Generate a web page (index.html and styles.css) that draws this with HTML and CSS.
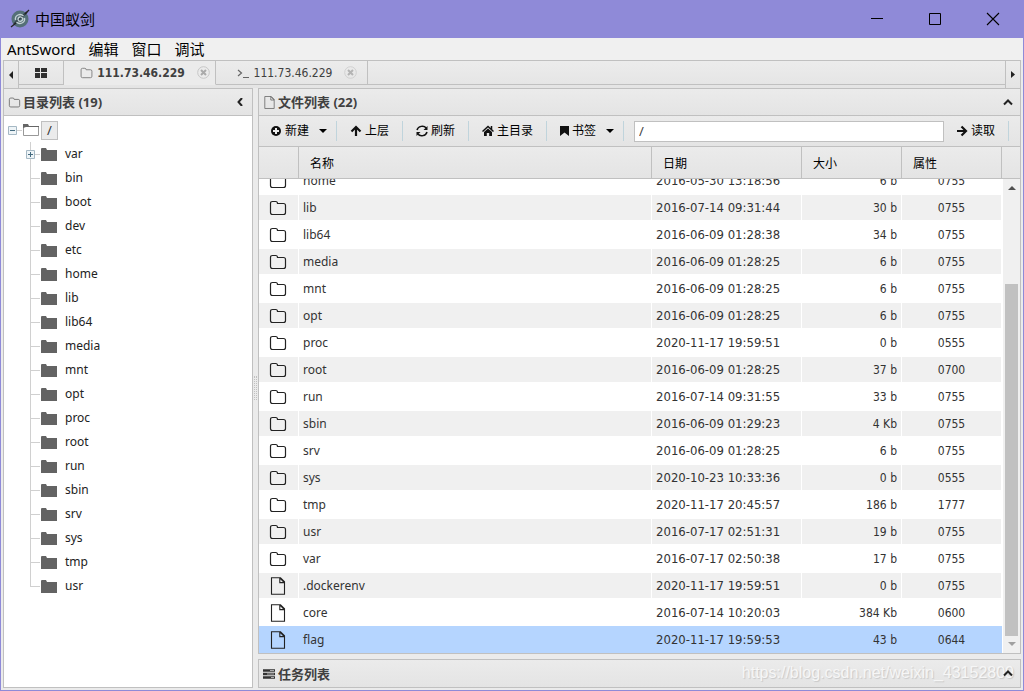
FILE: index.html
```html
<!DOCTYPE html>
<html lang="zh-CN">
<head>
<meta charset="utf-8">
<title>中国蚁剑</title>
<link rel="stylesheet" href="styles.css">
</head>
<body>
<svg class="sprite" width="0" height="0" aria-hidden="true">
  <symbol id="folder" viewBox="0 0 18 16"><path d="M1.500 12.500v-9q0-2 2-2h3.200q1.800 0 1.800 2h6q2 0 2 2v7q0 2-2 2h-11q-2 0-2-2z" fill="none" stroke="currentColor" stroke-width="1.200"/></symbol>
  <symbol id="file" viewBox="0 0 18 18"><path d="M2.500.7h9l4 4v12.600h-13zM10.800 1v4.600h4.500M11 1l4.300 4.500" fill="none" stroke="currentColor" stroke-width="1.100"/></symbol>
  <symbol id="solid" viewBox="0 0 16 13"><path d="M0 1q0-1 1-1h4l1 2h10v11H0z" fill="#636363"/></symbol>
  <symbol id="down" viewBox="0 0 8 4"><path d="M0 0h8L4 4z" fill="currentColor"/></symbol>
</svg>
<div class="window">
  <header class="titlebar">
    <svg class="logo" width="20" height="20" viewBox="0 0 20 20"><circle cx="10" cy="10" r="8.500" fill="#557078"/><path d="M4 15L17 3" stroke="#34434a" stroke-width="2"/><path d="M5.500 11c-1-5 5-7 8-4M14.500 9c1 5-5 7-8 4M8 11c0-4 4-4 5-1-1 3-4 3-5 1" fill="none" stroke="#c5d2d6" stroke-width="1.300"/><path d="M1 18l5-4M15 5l4-4" stroke="#222" stroke-width="1.300"/></svg>
    <h1 class="title">中国蚁剑</h1>
    <div class="controls">
      <button class="ctl" aria-label="最小化"><svg width="14" height="14" viewBox="0 0 14 14"><path d="M1 6.500h12" stroke="#000"/></svg></button>
      <button class="ctl" aria-label="最大化"><svg width="14" height="14" viewBox="0 0 14 14"><path d="M1.500 1.500h11v11h-11z" fill="none" stroke="#000"/></svg></button>
      <button class="ctl" aria-label="关闭"><svg width="14" height="14" viewBox="0 0 14 14"><path d="M1 1l12 12M13 1L1 13" stroke="#000" stroke-width="1.100"/></svg></button>
    </div>
  </header>
  <nav class="menu"><button>AntSword</button><button>编辑</button><button>窗口</button><button>调试</button></nav>
  <main class="app">
    <div class="tabs">
      <button class="arrow" aria-label="向左"><svg width="4" height="8" viewBox="0 0 4 8"><path d="M4 0v8L0 4z" fill="#222"/></svg></button>
      <div class="tablist">
        <button class="tab home" aria-label="主页"><svg width="12" height="10" viewBox="0 0 12 10"><path d="M0 0h5v4H0zM6 0h6v4H6zM0 5h5v5H0zM6 5h6v5H6z" fill="#303030"/></svg></button>
        <div class="tab active"><svg class="tabicon" width="13" height="12"><use href="#folder"/></svg><button class="tabname">111.73.46.229</button><button class="close" aria-label="关闭标签"><svg width="13" height="13" viewBox="0 0 13 13"><circle cx="6.500" cy="6.500" r="5.800" fill="none" stroke="#c6c6c6"/><path d="M4 4l5 5M9 4L4 9" stroke="#aaa" stroke-width="2"/></svg></button></div>
        <div class="tab"><svg class="tabicon" width="13" height="12" viewBox="0 0 13 12"><path d="M1 3l3.500 3L1 9M6 10.500h6" fill="none" stroke="#666" stroke-width="1.200"/></svg><button class="tabname">111.73.46.229</button><button class="close" aria-label="关闭标签"><svg width="13" height="13" viewBox="0 0 13 13"><circle cx="6.500" cy="6.500" r="5.800" fill="none" stroke="#d0d0d0"/><path d="M4 4l5 5M9 4L4 9" stroke="#b4b4b4" stroke-width="2"/></svg></button></div>
      </div>
      <button class="arrow right" aria-label="向右"><svg width="4" height="7" viewBox="0 0 4 7"><path d="M0 0v7l4-3.500z" fill="#222"/></svg></button>
    </div>
    <div class="split">
      <section class="panel side">
        <div class="phead"><svg class="pico" width="13" height="11"><use href="#folder"/></svg><h2>目录列表 (19)</h2><button class="fold" aria-label="折叠"><svg width="6" height="8" viewBox="0 0 6 8"><path d="M5 0L1.500 4 5 8" fill="none" stroke="#222" stroke-width="2"/></svg></button></div>
        <div class="tree">
          <div class="root"><button class="box" aria-label="收起"><svg width="9" height="9" viewBox="0 0 9 9"><path d="M.5.5h8v8h-8z" fill="#eef4f7" stroke="#a5b8c4"/><path d="M2 4.500h5" stroke="#456b80"/></svg></button><i class="link"></i><svg class="open" width="16" height="12" viewBox="0 0 16 12"><path d="M.5 2.500h15v9H.5z" fill="#fff" stroke="#999"/><path d="M0 4V0h5l1 2h10v1H3z" fill="#666"/></svg><span class="slash">/</span></div>
          <ul class="nodes">
            <li class="first"><button class="box" aria-label="展开"><svg width="9" height="9" viewBox="0 0 9 9"><path d="M.5.5h8v8h-8z" fill="#eef4f7" stroke="#a5b8c4"/><path d="M2 4.500h5M4.500 2v5" stroke="#456b80"/></svg></button><svg width="16" height="13"><use href="#solid"/></svg>var</li>
            <li><svg width="16" height="13"><use href="#solid"/></svg>bin</li>
            <li><svg width="16" height="13"><use href="#solid"/></svg>boot</li>
            <li><svg width="16" height="13"><use href="#solid"/></svg>dev</li>
            <li><svg width="16" height="13"><use href="#solid"/></svg>etc</li>
            <li><svg width="16" height="13"><use href="#solid"/></svg>home</li>
            <li><svg width="16" height="13"><use href="#solid"/></svg>lib</li>
            <li><svg width="16" height="13"><use href="#solid"/></svg>lib64</li>
            <li><svg width="16" height="13"><use href="#solid"/></svg>media</li>
            <li><svg width="16" height="13"><use href="#solid"/></svg>mnt</li>
            <li><svg width="16" height="13"><use href="#solid"/></svg>opt</li>
            <li><svg width="16" height="13"><use href="#solid"/></svg>proc</li>
            <li><svg width="16" height="13"><use href="#solid"/></svg>root</li>
            <li><svg width="16" height="13"><use href="#solid"/></svg>run</li>
            <li><svg width="16" height="13"><use href="#solid"/></svg>sbin</li>
            <li><svg width="16" height="13"><use href="#solid"/></svg>srv</li>
            <li><svg width="16" height="13"><use href="#solid"/></svg>sys</li>
            <li><svg width="16" height="13"><use href="#solid"/></svg>tmp</li>
            <li><svg width="16" height="13"><use href="#solid"/></svg>usr</li>
          </ul>
        </div>
      </section>
      <div class="grip"><i></i></div>
      <div class="content">
        <section class="panel files">
          <div class="phead"><svg class="pico" width="13" height="13"><use href="#file"/></svg><h2>文件列表 (22)</h2><button class="fold" aria-label="折叠"><svg width="10" height="7" viewBox="0 0 10 7"><path d="M1 5.500L5 1.500l4 4" fill="none" stroke="#222" stroke-width="2"/></svg></button></div>
          <div class="toolbar">
            <button class="tool"><svg width="12" height="12" viewBox="0 0 12 12"><circle cx="6" cy="6" r="5" fill="#111"/><path d="M6 3v6M3 6h6" stroke="#eee" stroke-width="2"/></svg>新建<svg class="caret" width="8" height="4"><use href="#down"/></svg></button>
            <button class="tool"><svg width="12" height="12" viewBox="0 0 12 12"><path d="M6 11V2M1.500 6.500L6 2l4.500 4.500" fill="none" stroke="#111" stroke-width="2.200"/></svg>上层</button>
            <button class="tool"><svg width="12" height="12" viewBox="0 0 12 12"><path d="M1 5c1-4 7-5 9-2M11 7c-1 4-7 5-9 2" fill="none" stroke="#111" stroke-width="1.500"/><path d="M11.500 1V5H7.500zM.5 11V7H4.500z" fill="#111"/></svg>刷新</button>
            <button class="tool"><svg width="12" height="12" viewBox="0 0 12 12"><path d="M.5 6.500L6 1.500l5.500 5M9.500 1v4" fill="none" stroke="#111" stroke-width="1.500"/><path d="M2 7l4-3.500L10 7v4H7.200V8H4.800v3H2z" fill="#111"/></svg>主目录</button>
            <button class="tool mark"><svg width="9" height="12" viewBox="0 0 9 12"><path d="M0 1h9v10L4.500 7.500 0 11z" fill="#111"/></svg>书签<svg class="caret" width="8" height="4"><use href="#down"/></svg></button>
            <input class="path" type="text" value="/" aria-label="路径">
            <button class="tool read"><svg width="12" height="12" viewBox="0 0 12 12"><path d="M1 6h9M5.500 1.500L10 6l-4.500 4.500" fill="none" stroke="#111" stroke-width="2.200"/></svg>读取</button>
          </div>
          <div class="headrow">
            <table class="grid head"><colgroup><col class="c-icon"><col><col class="c-date"><col class="c-num"><col class="c-num"></colgroup><thead><tr><th></th><th>名称</th><th>日期</th><th>大小</th><th>属性</th></tr></thead></table>
          </div>
          <div class="body">
            <div class="rows">
              <table class="grid data" aria-label="文件列表"><colgroup><col class="c-icon"><col><col class="c-date"><col class="c-num"><col class="c-num"></colgroup><tbody>
                <tr><td><svg width="18" height="16"><use href="#folder"/></svg></td><td>home</td><td>2016-05-30 13:18:56</td><td>6 b</td><td>0755</td></tr>
                <tr><td><svg width="18" height="16"><use href="#folder"/></svg></td><td>lib</td><td>2016-07-14 09:31:44</td><td>30 b</td><td>0755</td></tr>
                <tr><td><svg width="18" height="16"><use href="#folder"/></svg></td><td>lib64</td><td>2016-06-09 01:28:38</td><td>34 b</td><td>0755</td></tr>
                <tr><td><svg width="18" height="16"><use href="#folder"/></svg></td><td>media</td><td>2016-06-09 01:28:25</td><td>6 b</td><td>0755</td></tr>
                <tr><td><svg width="18" height="16"><use href="#folder"/></svg></td><td>mnt</td><td>2016-06-09 01:28:25</td><td>6 b</td><td>0755</td></tr>
                <tr><td><svg width="18" height="16"><use href="#folder"/></svg></td><td>opt</td><td>2016-06-09 01:28:25</td><td>6 b</td><td>0755</td></tr>
                <tr><td><svg width="18" height="16"><use href="#folder"/></svg></td><td>proc</td><td>2020-11-17 19:59:51</td><td>0 b</td><td>0555</td></tr>
                <tr><td><svg width="18" height="16"><use href="#folder"/></svg></td><td>root</td><td>2016-06-09 01:28:25</td><td>37 b</td><td>0700</td></tr>
                <tr><td><svg width="18" height="16"><use href="#folder"/></svg></td><td>run</td><td>2016-07-14 09:31:55</td><td>33 b</td><td>0755</td></tr>
                <tr><td><svg width="18" height="16"><use href="#folder"/></svg></td><td>sbin</td><td>2016-06-09 01:29:23</td><td>4 Kb</td><td>0755</td></tr>
                <tr><td><svg width="18" height="16"><use href="#folder"/></svg></td><td>srv</td><td>2016-06-09 01:28:25</td><td>6 b</td><td>0755</td></tr>
                <tr><td><svg width="18" height="16"><use href="#folder"/></svg></td><td>sys</td><td>2020-10-23 10:33:36</td><td>0 b</td><td>0555</td></tr>
                <tr><td><svg width="18" height="16"><use href="#folder"/></svg></td><td>tmp</td><td>2020-11-17 20:45:57</td><td>186 b</td><td>1777</td></tr>
                <tr><td><svg width="18" height="16"><use href="#folder"/></svg></td><td>usr</td><td>2016-07-17 02:51:31</td><td>19 b</td><td>0755</td></tr>
                <tr><td><svg width="18" height="16"><use href="#folder"/></svg></td><td>var</td><td>2016-07-17 02:50:38</td><td>17 b</td><td>0755</td></tr>
                <tr><td><svg width="18" height="18"><use href="#file"/></svg></td><td>.dockerenv</td><td>2020-11-17 19:59:51</td><td>0 b</td><td>0755</td></tr>
                <tr><td><svg width="18" height="18"><use href="#file"/></svg></td><td>core</td><td>2016-07-14 10:20:03</td><td>384 Kb</td><td>0600</td></tr>
                <tr class="selected"><td><svg width="18" height="18"><use href="#file"/></svg></td><td>flag</td><td>2020-11-17 19:59:53</td><td>43 b</td><td>0644</td></tr>
              </tbody></table>
            </div>
            <div class="scroll"><svg width="8" height="4" viewBox="0 0 8 4"><path d="M0 4h8L4 0z" fill="#505050"/></svg><div class="track"><div class="thumb"></div></div><svg class="dim" width="8" height="4"><use href="#down"/></svg></div>
          </div>
        </section>
        <section class="panel tasks">
          <div class="phead"><svg class="pico" width="13" height="10" viewBox="0 0 13 10"><path d="M0 1.500h12M0 5h12M0 8.500h12" stroke="#333" stroke-width="2.400"/><path d="M7 1.500h4M4 5h7M8 8.500h3" stroke="#aaa"/></svg><h2>任务列表</h2><span class="watermark">https://blog.csdn.net/weixin_43152809</span><button class="fold" aria-label="展开"><svg width="10" height="7" viewBox="0 0 10 7"><path d="M1 5.500L5 1.500l4 4" fill="none" stroke="#222" stroke-width="2"/></svg></button></div>
        </section>
      </div>
    </div>
  </main>
</div>
</body>
</html>
```
FILE: styles.css
```css
* { box-sizing: border-box; }
body { margin: 0; font-family: "Noto Sans", "Noto Sans CJK SC", sans-serif; font-size: 12px; color: #333; }
button { font: inherit; color: inherit; background: none; border: 0; padding: 0; margin: 0; }
svg { flex: none; display: block; }
.sprite { position: absolute; }
h1, h2 { margin: 0; }
.window { height: 100vh; display: flex; flex-direction: column; border: 1px solid #8f8ad8; border-top: 0; background: #ebebeb; overflow: hidden; }
.titlebar { height: 38px; flex: none; display: flex; align-items: center; background: #8f8ad8; padding-left: 9px; color: #000; }
.title { font-size: 15px; font-weight: 400; line-height: 20px; margin-left: 5px; }
.controls { margin-left: auto; display: flex; padding-right: 1px; }
.ctl { width: 58px; height: 38px; display: flex; align-items: center; justify-content: center; }
.menu { height: 22px; flex: none; display: flex; align-items: center; gap: 13px; padding-left: 6px; background: #f0f0f0; font-size: 15px; line-height: 20px; color: #000; }
.app { flex: 1; min-height: 0; display: flex; flex-direction: column; padding: 0 2px 2px; }
.tabs { height: 28px; flex: none; display: flex; border: 1px solid #c0c0c0; border-bottom: 0; background: linear-gradient(#ececec, #e4e4e4); }
.arrow { width: 15px; display: flex; align-items: center; justify-content: center; border-right: 1px solid #c0c0c0; }
.arrow.right { border-right: 0; border-left: 1px solid #c0c0c0; }
.tablist { flex: 1; display: flex; height: 24px; border-bottom: 1px solid #c0c0c0; }
.tab { width: 152px; height: 24px; display: flex; align-items: center; justify-content: center; border-right: 1px solid #c0c0c0; border-bottom: 1px solid #c0c0c0; color: #404040; }
.tab.home { width: 45px; }
.tab.active { background: #ebebeb; border-bottom-color: #ebebeb; font-weight: 700; }
.tabicon { color: #777; margin: 0 4px 0 11px; }
.tabname { font-family: "DejaVu Sans Condensed", "DejaVu Sans", sans-serif; font-stretch: condensed; font-size: 12px; line-height: 16px; padding-top: 1px; }
.close { margin-left: 12px; }
.split { flex: 1; min-height: 0; display: flex; }
.panel { border: 1px solid #c0c0c0; display: flex; flex-direction: column; }
.side { width: 250px; flex: none; }
.grip { width: 5px; flex: none; display: flex; align-items: center; justify-content: center; }
.grip i { width: 3px; height: 24px; border: 1px dotted #c0c0c0; }
.content { flex: 1; min-width: 0; display: flex; flex-direction: column; gap: 5px; }
.files { flex: 1; min-height: 0; }
.phead { height: 27px; flex: none; display: flex; align-items: center; gap: 2px; padding: 0 7px 0 4px; background: linear-gradient(#ebebeb, #e4e4e4); border-bottom: 1px solid #c0c0c0; position: relative; }
.side .phead { padding-right: 9px; }
.tasks .phead { border-bottom: 0; }
.phead h2 { font-size: 13px; line-height: 18px; font-weight: 700; color: #404040; }
.pico { color: #666; }
.fold { margin-left: auto; padding: 4px 0; }
.tree { flex: 1; background: #fff; padding: 2px 0 0 4px; overflow: hidden; }
.root { height: 24px; display: flex; align-items: center; }
.link { width: 5px; height: 1px; background: #d0d0d0; }
.root .open { margin: 0 2px 0 1px; }
.slash { border: 1px solid #c0c0c0; background: #ebebeb; width: 17px; height: 19px; font-size: 13px; line-height: 17px; text-align: center; }
.nodes { list-style: none; margin: 0; padding: 0 0 0 22px; }
.nodes li { height: 24px; display: flex; align-items: center; gap: 8px; color: #222; line-height: 24px; background: linear-gradient(#d0d0d0, #d0d0d0) 0 0 / 1px 100% no-repeat, linear-gradient(#d0d0d0, #d0d0d0) 0 12px / 10px 1px no-repeat; padding-left: 11px; }
.nodes li:last-child { background-size: 1px 12px, 10px 1px; }
.nodes .first { position: relative; }
.first .box { position: absolute; left: -4px; top: 8px; }
.toolbar { height: 31px; flex: none; display: flex; align-items: center; background: linear-gradient(#ebebeb, #e4e4e4); border-bottom: 1px solid #c0c0c0; color: #000; }
.tool { height: 20px; display: flex; align-items: center; gap: 3px; border-right: 1px solid #c0d4dc; padding: 0 13px; line-height: 20px; white-space: nowrap; }
.tool .caret { margin-left: 7px; }
.tool:first-child { padding: 0 9px 0 11px; }
.tool.mark { padding: 0 9px 0 13px; }
.path { flex: 1; min-width: 0; height: 21px; margin-left: 10px; border: 1px solid #c0c0c0; background: #fff; padding: 0 4px; font: inherit; font-size: 13px; color: #444; }
.tool.read { margin-right: 11px; padding-left: 12px; }
.headrow { flex: none; padding-right: 18px; background: linear-gradient(#ebebeb, #e4e4e4); border-bottom: 1px solid #c0c0c0; }
.grid { width: 100%; table-layout: fixed; border-collapse: separate; border-spacing: 0; }
.c-icon { width: 40px; }
.c-date { width: 150px; }
.c-num { width: 100px; }
.head th { height: 31px; padding: 0 11px; border-right: 1px solid #c0c0c0; text-align: left; font-weight: 400; color: #000; }
.body { flex: 1; min-height: 0; display: flex; background: #fff; }
.rows { flex: 1; min-width: 0; display: flex; flex-direction: column; justify-content: flex-end; overflow: hidden; }
.data { flex: none; }
.data td { height: 27px; padding: 0 4px; border: solid #fff; border-width: 1px 1px 1px 0; line-height: 18px; color: #333; white-space: nowrap; }
.data tr:nth-child(even) td { background: #f0f0f0; }
.data td:first-child { padding-left: 10px; color: #222; }
.data td:nth-child(n+3) { font-family: "DejaVu Sans Condensed", "DejaVu Sans", sans-serif; font-stretch: condensed; }
.data td:nth-child(3) { font-size: 13px; }
.data td:nth-child(4) { text-align: right; }
.data td:nth-child(5) { text-align: center; }
.data tr.selected td { background: #b5d5ff; border-color: #b5d5ff; }
.scroll { width: 18px; flex: none; display: flex; flex-direction: column; align-items: center; background: #f0f0f0; border-left: 1px solid #fff; padding: 7px 0; }
.track { flex: 1; align-self: stretch; display: flex; flex-direction: column; justify-content: flex-end; padding: 6px 2px; }
.thumb { height: 80%; background: #c1c1c1; }
.dim { color: #a0a0a0; }
.watermark { position: absolute; right: 6px; top: 3px; font: 16px/20px "Liberation Sans", sans-serif; color: #f6f6f6; text-shadow: 1px 1px 1px #c8c8c8; }
.tasks .fold { position: relative; }
```
